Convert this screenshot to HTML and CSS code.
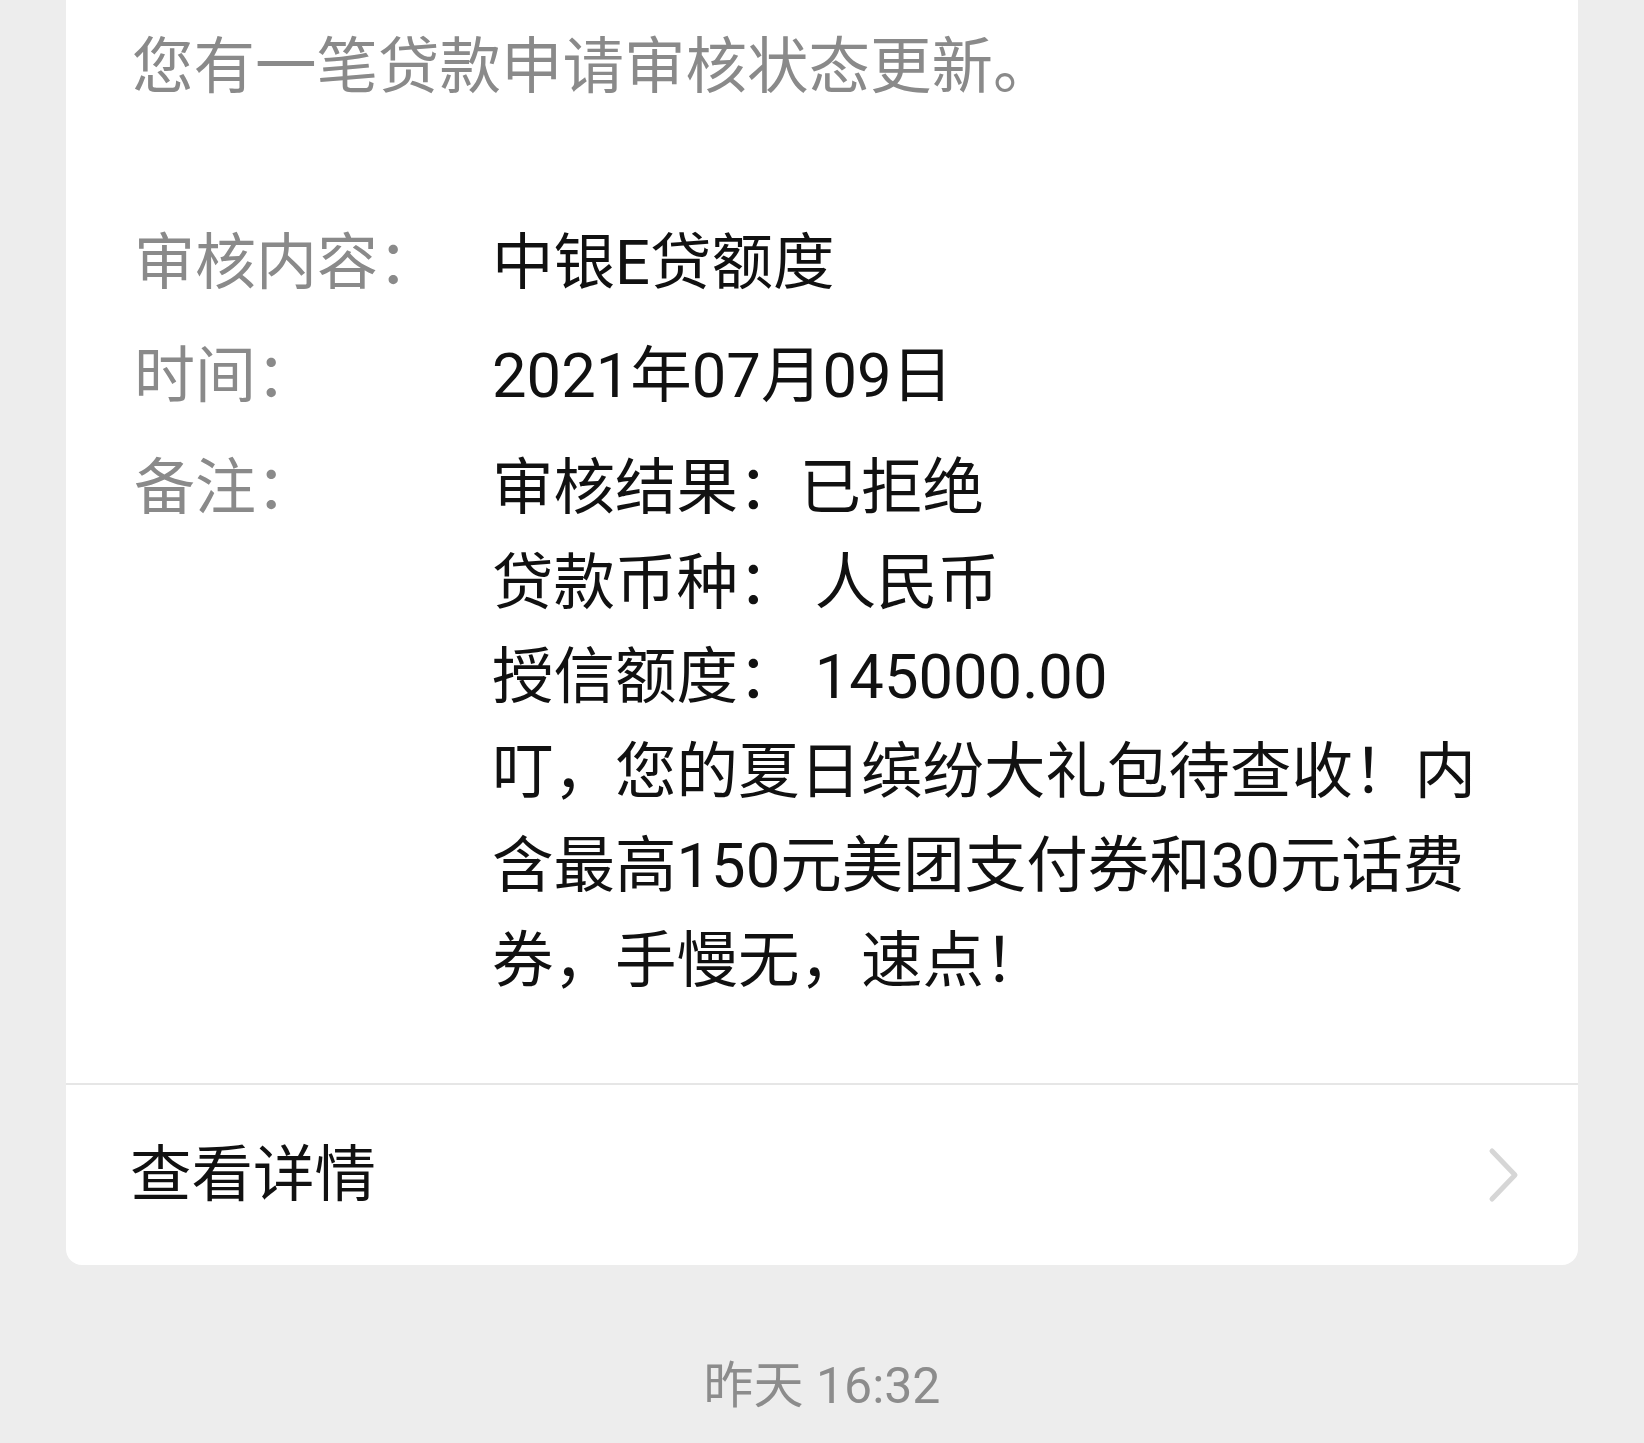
FILE: index.html
```html
<!DOCTYPE html>
<html lang="zh-CN">
<head>
<meta charset="utf-8">
<title>服务通知</title>
<link rel="stylesheet" href="styles.css">
</head>
<body>
<main class="page">
  <section class="card">
    <div class="card-body">
      <p class="intro">您有一笔贷款申请审核状态更新。</p>
      <dl class="fields">
        <div class="field">
          <dt class="label">审核内容：</dt>
          <dd class="value">中银E贷额度</dd>
        </div>
        <div class="field">
          <dt class="label">时间：</dt>
          <dd class="value">2021年07月09日</dd>
        </div>
        <div class="field">
          <dt class="label">备注：</dt>
          <dd class="value">
            <span class="line">审核结果：已拒绝</span>
            <span class="line">贷款币种： 人民币</span>
            <span class="line">授信额度： 145000.00</span>
            <span class="line">叮，您的夏日缤纷大礼包待查收！内含最高150元美团支付券和30元话费券，手慢无，速点！</span>
          </dd>
        </div>
      </dl>
    </div>
    <a class="card-footer" href="#">
      <span class="footer-text">查看详情</span>
      <svg class="chevron" width="32" height="56" viewBox="0 0 32 56" aria-hidden="true">
        <polyline points="4,4 27,28 4,52" fill="none" stroke="#d6d6d6" stroke-width="5" stroke-linecap="round" stroke-linejoin="round"/>
      </svg>
    </a>
  </section>
  <p class="timestamp">昨天 16:32</p>
</main>
</body>
</html>
```

FILE: styles.css
```css
* {
  box-sizing: border-box;
}

html, body {
  margin: 0;
  padding: 0;
}

body {
  background: #ededed;
  font-family: Roboto, "Noto Sans CJK SC", "Noto Sans", sans-serif;
  width: 1644px;
  height: 1443px;
  overflow: hidden;
}

.page {
  display: flex;
  flex-direction: column;
  align-items: stretch;
  padding: 0 66px;
}

.card {
  background: #ffffff;
  border-radius: 0 0 16px 16px;
  display: flex;
  flex-direction: column;
}

.card-body {
  padding: 20px 68px 75px 66px;
}

.intro {
  margin: 0 0 102px 0;
  font-size: 61.5px;
  line-height: 94px;
  color: #8a8a8a;
  white-space: nowrap;
}

.fields {
  margin: 0;
  padding-left: 2px;
  display: flex;
  flex-direction: column;
  gap: 18px;
}

.field {
  display: flex;
  align-items: flex-start;
}

.label {
  flex: 0 0 358px;
  margin: 0;
  font-size: 61px;
  line-height: 94.5px;
  color: #8a8a8a;
  white-space: nowrap;
}

.value {
  flex: 1 1 auto;
  margin: 0;
  font-size: 61.5px;
  line-height: 94.5px;
  color: #111111;
  display: flex;
  flex-direction: column;
}

.line {
  display: block;
}

.card-footer {
  height: 182px;
  border-top: 2px solid #e6e6e6;
  display: flex;
  align-items: center;
  justify-content: space-between;
  padding: 0 58px 0 64px;
  text-decoration: none;
}

.footer-text {
  font-size: 61.5px;
  line-height: 94px;
  color: #111111;
}

.chevron {
  display: block;
}

.timestamp {
  margin: 91px 0 0 0;
  text-align: center;
  font-size: 50px;
  line-height: 60px;
  color: #8c8c8c;
}
```
